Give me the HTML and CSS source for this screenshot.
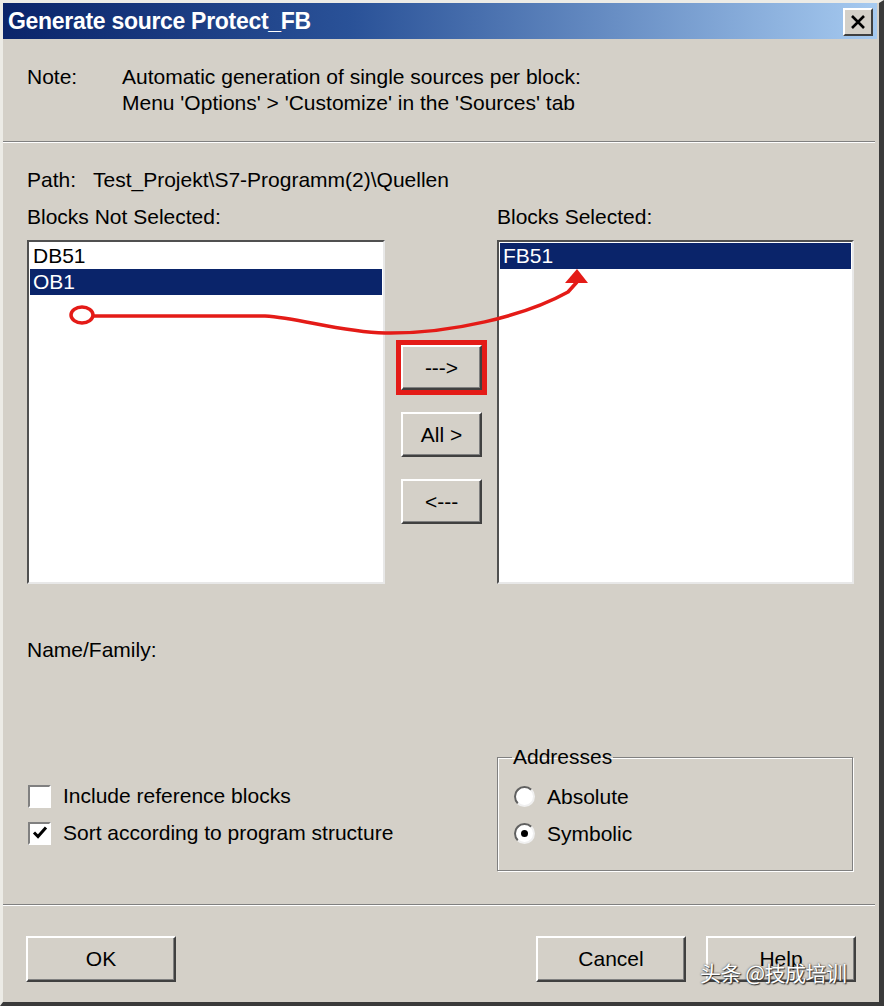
FILE: index.html
```html
<!DOCTYPE html>
<html>
<head>
<meta charset="utf-8">
<link rel="stylesheet" href="styles.css">
</head>
<body>
<div class="window">
  <div class="titlebar">
    <span class="title">Generate source Protect_FB</span>
    <span class="close"><svg width="16" height="16" viewBox="0 0 16 16"><path d="M2 2 L14 14 M14 2 L2 14" stroke="#000" stroke-width="2.6" fill="none"/></svg></span>
  </div>
  <div class="note">
    <span class="note-label">Note:</span>
    <div class="note-text">Automatic generation of single sources per block:<br>Menu 'Options' &gt; 'Customize' in the 'Sources' tab</div>
  </div>
  <div class="sep"></div>
  <div class="main">
    <div class="path"><span class="path-label">Path:</span><span>Test_Projekt\S7-Programm(2)\Quellen</span></div>
    <div class="lists">
      <div class="label">Blocks Not Selected:</div>
      <div class="label label-right">Blocks Selected:</div>
      <div class="listbox">
        <div class="item">DB51</div>
        <div class="item selected">OB1</div>
      </div>
      <div class="mover">
        <div class="btn small marked">---&gt;</div>
        <div class="btn small">All &gt;</div>
        <div class="btn small">&lt;---</div>
      </div>
      <div class="listbox">
        <div class="item selected">FB51</div>
      </div>
    </div>
    <div class="name">Name/Family:</div>
    <div class="options">
      <div class="checks">
        <div class="check-row"><span class="checkbox"></span><span>Include reference blocks</span></div>
        <div class="check-row"><span class="checkbox"><svg width="18" height="18" viewBox="0 0 18 18"><path d="M3 8.5 L7 12.5 L15 3.5" stroke="#000" stroke-width="3" fill="none"/></svg></span><span>Sort according to program structure</span></div>
      </div>
      <fieldset class="group">
        <legend>Addresses</legend>
        <div class="radio-row"><span class="radio"></span><span>Absolute</span></div>
        <div class="radio-row"><span class="radio on"></span><span>Symbolic</span></div>
      </fieldset>
    </div>
  </div>
  <div class="sep sep-bottom"></div>
  <div class="footer">
    <div class="btn wide">OK</div>
    <div class="footer-right">
      <div class="btn wide">Cancel</div>
      <div class="btn wide">Help</div>
    </div>
  </div>
</div>
<svg class="annot" width="884" height="1006" viewBox="0 0 884 1006">
  <ellipse cx="82" cy="315" rx="11" ry="8" fill="none" stroke="#e41b17" stroke-width="3.5"/>
  <path d="M93 316 L265 316 C300 318 340 332 385 333 C450 334 525 316 568 292 L577 282" fill="none" stroke="#e41b17" stroke-width="3.5"/>
  <polygon points="565,283 588,283 577,269" fill="#e41b17"/>
</svg>
<div class="watermark">头条 @技成培训</div>
</body>
</html>
```
FILE: styles.css
```css
html, body {
  margin: 0;
  padding: 0;
}
body {
  position: relative;
  width: 884px;
  height: 1006px;
  overflow: hidden;
  font-family: "Liberation Sans", Arial, sans-serif;
  font-size: 21px;
  line-height: 26px;
  color: #000;
  background: #d4d0c8;
}
.window {
  box-sizing: border-box;
  width: 884px;
  height: 1006px;
  background: #d4d0c8;
  border-top: 3px solid #ecebe6;
  border-left: 3px solid #ecebe6;
  border-right: 5px solid #3a3a3a;
  border-bottom: 4px solid #3a3a3a;
  display: flex;
  flex-direction: column;
}
.titlebar {
  height: 36px;
  flex: none;
  margin-right: 2px;
  background: linear-gradient(90deg, #0a246a 0%, #2a5298 40%, #a6caf0 100%);
  display: flex;
  align-items: center;
  justify-content: space-between;
  padding: 0 4px 0 5px;
}
.title {
  color: #fff;
  font-weight: bold;
  font-size: 23px;
  letter-spacing: -0.3px;
}
.close {
  box-sizing: border-box;
  width: 30px;
  height: 28px;
  margin-top: 2px;
  background: #d4d0c8;
  border-top: 2px solid #fff;
  border-left: 2px solid #fff;
  border-right: 2px solid #404040;
  border-bottom: 2px solid #404040;
  display: flex;
  align-items: center;
  justify-content: center;
}
.note {
  display: flex;
  margin: 25px 0 0 24px;
}
.note-label {
  width: 95px;
  flex: none;
}
.sep {
  flex: none;
  height: 0;
  margin: 25px 4px 0 0;
  border-top: 1px solid #808080;
  border-bottom: 1px solid #fff;
}
.sep-bottom {
  margin-top: 33px;
}
.main {
  padding: 0 0 0 24px;
}
.path {
  margin-top: 24px;
  display: flex;
}
.path-label {
  width: 66px;
}
.lists {
  margin-top: 11px;
  display: grid;
  grid-template-columns: 358px 112px 357px;
  grid-template-rows: 26px 344px;
  row-gap: 10px;
}
.label-right {
  grid-column: 3;
}
.listbox {
  box-sizing: border-box;
  background: #fff;
  border-top: 2px solid #505050;
  border-left: 2px solid #505050;
  border-right: 2px solid #e8e8e8;
  border-bottom: 2px solid #e8e8e8;
  padding: 1px;
}
.item {
  height: 26px;
  line-height: 26px;
  padding-left: 3px;
}
.item.selected {
  background: #0a246a;
  color: #fff;
}
.mover {
  display: flex;
  flex-direction: column;
  gap: 22px;
  padding: 105px 0 0 16px;
}
.btn {
  box-sizing: border-box;
  background: #d4d0c8;
  border-top: 2px solid #fff;
  border-left: 2px solid #fff;
  border-right: 2px solid #404040;
  border-bottom: 2px solid #404040;
  box-shadow: inset -1px -1px 0 #808080;
  display: flex;
  align-items: center;
  justify-content: center;
}
.btn.small {
  width: 81px;
  height: 45px;
}
.btn.marked {
  outline: 5px solid #e41b17;
}
.name {
  margin-top: 53px;
}
.options {
  margin-top: 81px;
  display: grid;
  grid-template-columns: 470px 356px;
}
.checks {
  display: flex;
  flex-direction: column;
  gap: 15px;
  padding-top: 41px;
  padding-left: 1px;
}
.check-row {
  display: flex;
  align-items: center;
  gap: 12px;
  height: 22px;
}
.checkbox {
  box-sizing: border-box;
  width: 23px;
  height: 23px;
  background: #fff;
  border-top: 2px solid #808080;
  border-left: 2px solid #808080;
  border-right: 2px solid #fff;
  border-bottom: 2px solid #fff;
  display: flex;
  align-items: center;
  justify-content: center;
}
.group {
  margin: 0;
  padding: 8px 0 0 16px;
  height: 127px;
  box-sizing: border-box;
  border: 1px solid #808080;
  box-shadow: 1px 1px 0 #fff, inset 1px 1px 0 #fff;
}
.group legend {
  padding: 0 1px;
  margin-left: -2px;
  line-height: 26px;
}
.radio-row {
  display: flex;
  align-items: center;
  gap: 12px;
  height: 37px;
}
.radio {
  box-sizing: border-box;
  width: 21px;
  height: 21px;
  border-radius: 50%;
  background: #fff;
  border: 2px solid;
  border-color: #606060 #f0f0f0 #f0f0f0 #606060;
  display: flex;
  align-items: center;
  justify-content: center;
}
.radio.on::after {
  content: "";
  width: 7px;
  height: 7px;
  border-radius: 50%;
  background: #000;
}
.footer {
  display: flex;
  justify-content: space-between;
  padding: 30px 23px 0 23px;
}
.footer-right {
  display: flex;
  gap: 20px;
}
.btn.wide {
  width: 150px;
  height: 46px;
}
.annot {
  position: absolute;
  left: 0;
  top: 0;
  pointer-events: none;
}
.watermark {
  position: absolute;
  left: 700px;
  top: 958px;
  font-family: "Noto Sans CJK SC", "Liberation Sans", sans-serif;
  font-size: 21px;
  line-height: 28px;
  color: #fff;
  text-shadow: 0 0 2px #333, 1px 1px 1px #333;
  letter-spacing: -0.5px;
}
```
